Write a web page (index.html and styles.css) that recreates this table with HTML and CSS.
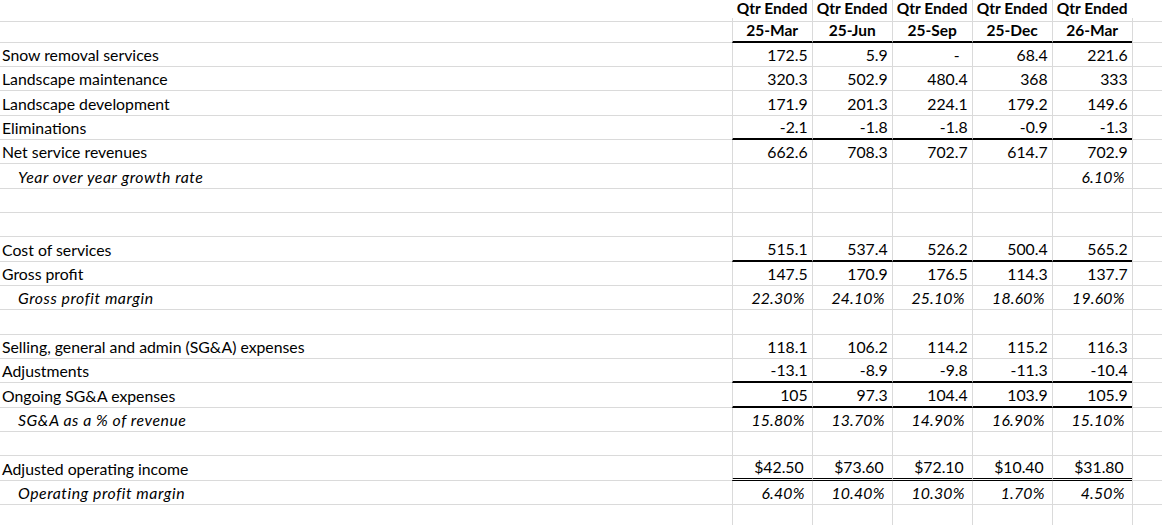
FILE: index.html
```html
<!DOCTYPE html>
<html>
<head>
<meta charset="utf-8">
<link rel="stylesheet" href="styles.css">
</head>
<body>
<div class="sheet">
  <div class="row top">
    <div class="label"></div>
    <div class="h">Qtr Ended</div><div class="h">Qtr Ended</div><div class="h">Qtr Ended</div><div class="h">Qtr Ended</div><div class="h">Qtr Ended</div>
    <div class="fill"></div>
  </div>
  <div class="row rule">
    <div class="label"></div>
    <div class="h">25-Mar</div><div class="h">25-Jun</div><div class="h">25-Sep</div><div class="h">25-Dec</div><div class="h">26-Mar</div>
    <div class="fill"></div>
  </div>
  <div class="row">
    <div class="label">Snow removal services</div>
    <div class="n">172.5</div><div class="n">5.9</div><div class="n dash">-</div><div class="n">68.4</div><div class="n">221.6</div>
    <div class="fill"></div>
  </div>
  <div class="row">
    <div class="label">Landscape maintenance</div>
    <div class="n">320.3</div><div class="n">502.9</div><div class="n">480.4</div><div class="n">368</div><div class="n">333</div>
    <div class="fill"></div>
  </div>
  <div class="row">
    <div class="label">Landscape development</div>
    <div class="n">171.9</div><div class="n">201.3</div><div class="n">224.1</div><div class="n">179.2</div><div class="n">149.6</div>
    <div class="fill"></div>
  </div>
  <div class="row rule">
    <div class="label">Eliminations</div>
    <div class="n">-2.1</div><div class="n">-1.8</div><div class="n">-1.8</div><div class="n">-0.9</div><div class="n">-1.3</div>
    <div class="fill"></div>
  </div>
  <div class="row">
    <div class="label">Net service revenues</div>
    <div class="n">662.6</div><div class="n">708.3</div><div class="n">702.7</div><div class="n">614.7</div><div class="n">702.9</div>
    <div class="fill"></div>
  </div>
  <div class="row">
    <div class="label sub">Year over year growth rate</div>
    <div class="p"></div><div class="p"></div><div class="p"></div><div class="p"></div><div class="p">6.10%</div>
    <div class="fill"></div>
  </div>
  <div class="row">
    <div class="label"></div>
    <div></div><div></div><div></div><div></div><div></div>
    <div class="fill"></div>
  </div>
  <div class="row">
    <div class="label"></div>
    <div></div><div></div><div></div><div></div><div></div>
    <div class="fill"></div>
  </div>
  <div class="row rule">
    <div class="label">Cost of services</div>
    <div class="n">515.1</div><div class="n">537.4</div><div class="n">526.2</div><div class="n">500.4</div><div class="n">565.2</div>
    <div class="fill"></div>
  </div>
  <div class="row">
    <div class="label">Gross profit</div>
    <div class="n">147.5</div><div class="n">170.9</div><div class="n">176.5</div><div class="n">114.3</div><div class="n">137.7</div>
    <div class="fill"></div>
  </div>
  <div class="row">
    <div class="label sub">Gross profit margin</div>
    <div class="p">22.30%</div><div class="p">24.10%</div><div class="p">25.10%</div><div class="p">18.60%</div><div class="p">19.60%</div>
    <div class="fill"></div>
  </div>
  <div class="row">
    <div class="label"></div>
    <div></div><div></div><div></div><div></div><div></div>
    <div class="fill"></div>
  </div>
  <div class="row">
    <div class="label">Selling, general and admin (SG&amp;A) expenses</div>
    <div class="n">118.1</div><div class="n">106.2</div><div class="n">114.2</div><div class="n">115.2</div><div class="n">116.3</div>
    <div class="fill"></div>
  </div>
  <div class="row rule">
    <div class="label">Adjustments</div>
    <div class="n">-13.1</div><div class="n">-8.9</div><div class="n">-9.8</div><div class="n">-11.3</div><div class="n">-10.4</div>
    <div class="fill"></div>
  </div>
  <div class="row rule">
    <div class="label">Ongoing SG&amp;A expenses</div>
    <div class="n">105</div><div class="n">97.3</div><div class="n">104.4</div><div class="n">103.9</div><div class="n">105.9</div>
    <div class="fill"></div>
  </div>
  <div class="row">
    <div class="label sub">SG&amp;A as a % of revenue</div>
    <div class="p">15.80%</div><div class="p">13.70%</div><div class="p">14.90%</div><div class="p">16.90%</div><div class="p">15.10%</div>
    <div class="fill"></div>
  </div>
  <div class="row">
    <div class="label"></div>
    <div></div><div></div><div></div><div></div><div></div>
    <div class="fill"></div>
  </div>
  <div class="row dbl">
    <div class="label">Adjusted operating income</div>
    <div class="n d">$42.50</div><div class="n d">$73.60</div><div class="n d">$72.10</div><div class="n d">$10.40</div><div class="n d">$31.80</div>
    <div class="fill"></div>
  </div>
  <div class="row">
    <div class="label sub">Operating profit margin</div>
    <div class="p">6.40%</div><div class="p">10.40%</div><div class="p">10.30%</div><div class="p">1.70%</div><div class="p">4.50%</div>
    <div class="fill"></div>
  </div>
  <div class="row">
    <div class="label"></div>
    <div></div><div></div><div></div><div></div><div></div>
    <div class="fill"></div>
  </div>
</div>
</body>
</html>
```

FILE: styles.css
```css
html, body {
  margin: 0;
  padding: 0;
  background: #ffffff;
}

body {
  width: 1162px;
  height: 525px;
  overflow: hidden;
  font-family: Lato, "Liberation Sans", Arial, sans-serif;
  font-size: 15.8px;
  color: #000000;
}

.sheet {
  width: 1162px;
}

.row {
  display: grid;
  grid-template-columns: 731.7px repeat(5, 80px) 1fr;
  height: 24.33px;
}

.row > div {
  box-sizing: border-box;
  display: flex;
  align-items: flex-end;
  border-bottom: 1px solid #dadada;
  padding-bottom: 3px;
  line-height: 16px;
  white-space: nowrap;
  overflow: visible;
}

.row > div + div {
  border-left: 1px solid #dadada;
}

.row.top {
  height: 18.33px;
}

.row.top > div {
  padding-bottom: 5px;
}

.row.top > div:nth-child(2),
.row.top > .fill {
  border-left-color: transparent;
}

.label {
  padding-left: 2px;
}

.label.sub {
  padding-left: 18px;
  font-style: italic;
  letter-spacing: 0.55px;
}

.h {
  justify-content: center;
  font-weight: 700;
  font-size: 15.5px;
}

.n {
  justify-content: flex-end;
  padding-right: 4px;
}

.n.dash {
  padding-right: 12px;
}

.n.d {
  padding-right: 8px;
}

.p {
  justify-content: flex-end;
  padding-right: 7px;
  font-style: italic;
  letter-spacing: 0.2px;
}

.row.rule > div:nth-child(n+2):nth-child(-n+6) {
  border-bottom: 2px solid #000000;
}

.row.dbl > div:nth-child(n+2):nth-child(-n+6) {
  border-bottom: 3px double #000000;
}
```
